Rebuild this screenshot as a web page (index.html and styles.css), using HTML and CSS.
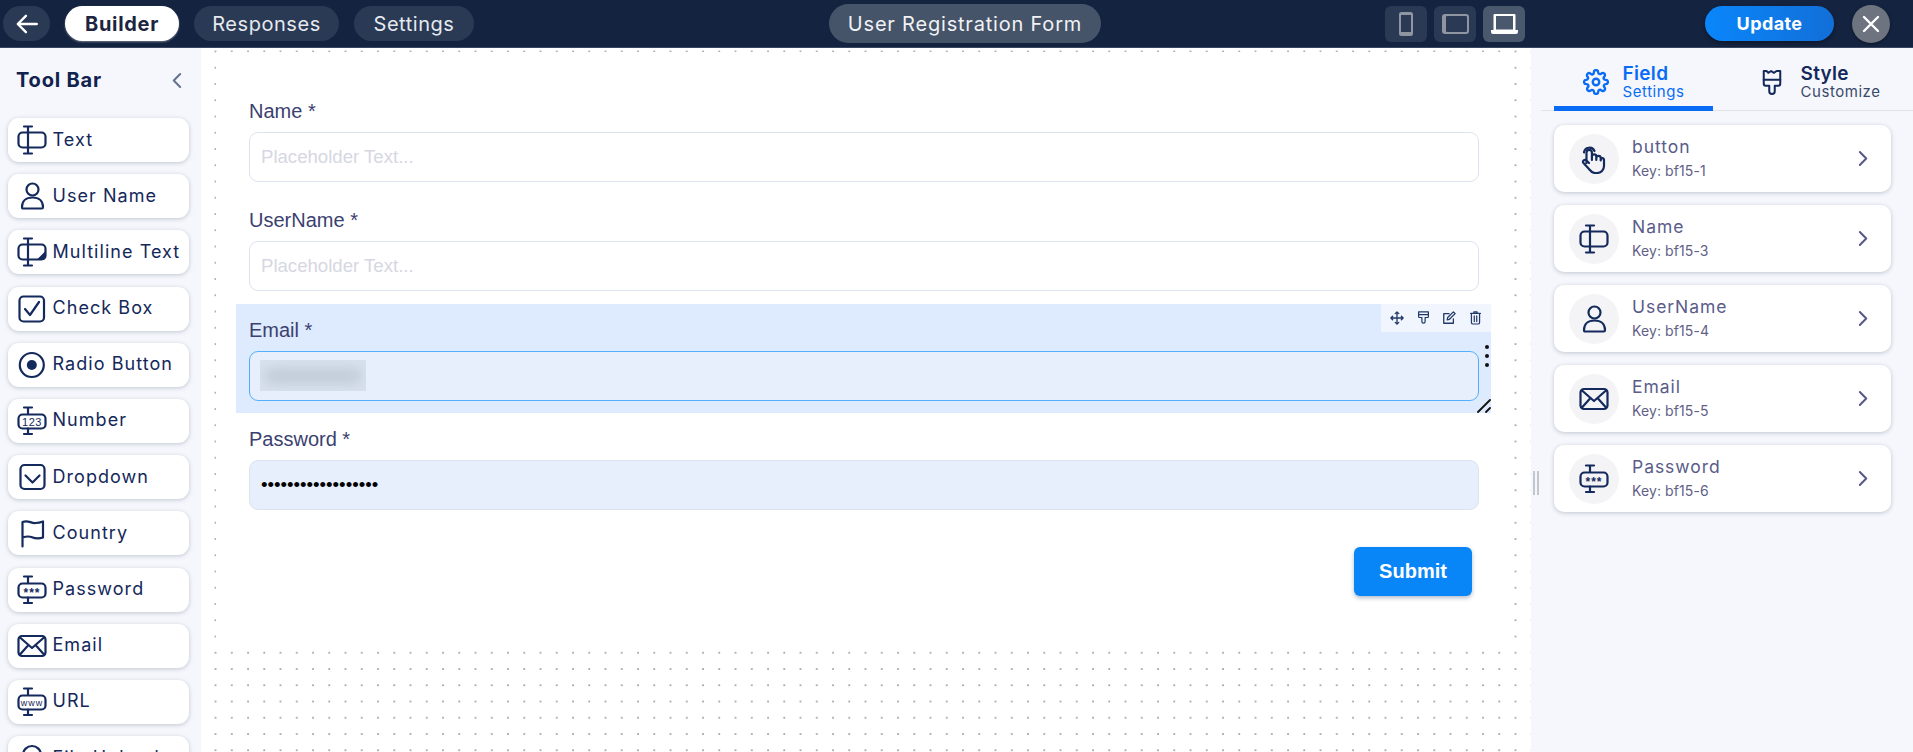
FILE: index.html
```html
<!DOCTYPE html>
<html lang="en">
<head>
<meta charset="utf-8">
<title>User Registration Form</title>
<link rel="stylesheet" href="styles.css">
</head>
<body>
<svg class="defs" width="0" height="0" aria-hidden="true">
  <symbol id="i-text" viewBox="0 0 32 30"><path d="M12 1.500v27M8 1.500h8M8 28.500h8"/><rect x="2.500" y="7.500" width="27" height="15" rx="4"/></symbol>
  <symbol id="i-multi" viewBox="0 0 32 30"><path d="M12 1.500v27M8 1.500h8M8 28.500h8"/><rect x="2.500" y="7.500" width="27" height="15" rx="4"/><path class="solid" d="M29.500 14v6a3 3 0 0 1-3 3h-6z"/></symbol>
  <symbol id="i-user" viewBox="0 0 32 30"><circle cx="16.500" cy="8.500" r="6"/><path d="M6 26c0-6 4-9.500 10.500-9.500S27 20 27 26c0 .8-.5 1.500-1.200 1.500H7.200C6.500 27.500 6 26.800 6 26z"/></symbol>
  <symbol id="i-check" viewBox="0 0 32 30"><rect x="3.500" y="2.500" width="24.500" height="25" rx="4"/><path d="M9 15l5 6L23 8"/></symbol>
  <symbol id="i-radio" viewBox="0 0 32 30"><circle cx="15.800" cy="15" r="12"/><circle class="solid" cx="15.800" cy="15" r="5"/></symbol>
  <symbol id="i-drop" viewBox="0 0 32 30"><rect x="4.500" y="3" width="24" height="24" rx="4"/><path d="M9.500 13.500l7 7 7-7"/></symbol>
  <symbol id="i-flag" viewBox="0 0 32 30"><path d="M6.500 28.500V4c6-2.500 8 1.500 13 1 2.500 0 5-.5 7.500-1.500v16c-6 2-9 .5-11.500-.5-3-1-6-.5-9 .5"/></symbol>
  <symbol id="i-mail" viewBox="0 0 32 30"><rect x="2.500" y="5" width="27" height="20" rx="3.500"/><path d="M4 6.500l12 10.500L28 6.500M4 23.500l8.500-9.500M28 23.500L19.500 14"/></symbol>
  <symbol id="i-file" viewBox="0 0 32 30"><circle cx="16" cy="12" r="9"/></symbol>
  <symbol id="i-hand" viewBox="0 0 32 30"><path d="M8.500 19V8.500a2.700 2.700 0 0 1 5.400 0V16M13.900 15v-2.500a2.200 2.200 0 0 1 4.400 0V16M18.300 14a2.200 2.200 0 0 1 4.400 0v2.500M22.700 15.500a1.700 1.700 0 0 1 3.300 0V22c0 4-3 7-7 7h-2c-3 0-4-1.500-6-4l-5.500-6c-1.500-2 1-4 3-2.500l2.500 2.500"/><path d="M6 8.500a5.500 5.500 0 0 1 10.500-1.500"/></symbol>
  <symbol id="i-gear" viewBox="0 0 24 24"><circle cx="12" cy="12" r="3"/><path d="M19.400 15a1.650 1.650 0 0 0 .33 1.820l.06.06a2 2 0 1 1-2.830 2.830l-.06-.06a1.650 1.650 0 0 0-2.820 1.170V21a2 2 0 0 1-4 0v-.09A1.650 1.650 0 0 0 7.270 19.740l-.06.06a2 2 0 1 1-2.830-2.830l.06-.06A1.650 1.650 0 0 0 3.270 14H3a2 2 0 0 1 0-4h.09A1.650 1.650 0 0 0 4.260 7.270l-.06-.06a2 2 0 1 1 2.830-2.830l.06.06A1.650 1.650 0 0 0 10 3.270V3a2 2 0 0 1 4 0v.09a1.650 1.650 0 0 0 2.820 1.170l.06-.06a2 2 0 1 1 2.830 2.830l-.06.06A1.650 1.650 0 0 0 20.910 10H21a2 2 0 0 1 0 4h-.09a1.650 1.650 0 0 0-1.510 1z"/></symbol>
  <symbol id="i-brush" viewBox="0 0 24 30"><path d="M3 3h3l2 2 3-2 3 2 3-2h4v14a2 2 0 0 1-2 2h-4v6a3 3 0 0 1-6 0v-6H5a2 2 0 0 1-2-2z"/><path d="M3 12.500h18"/></symbol>
</svg>

<header class="topbar">
  <div class="nav">
    <button class="pill back" aria-label="Back"><svg viewBox="0 0 24 24" width="26" height="26"><path d="M21 12H4M11 4.500L3.500 12l7.500 7.500"/></svg></button>
    <button class="pill active w-builder">Builder</button>
    <button class="pill w-resp">Responses</button>
    <button class="pill w-set">Settings</button>
  </div>
  <div class="form-title">User Registration Form</div>
  <div class="devices">
    <button class="dev"><svg viewBox="0 0 16 24" width="16" height="24"><rect x="1" y="0" width="14" height="24" rx="2.500" fill="#8f96a2"/><rect x="3" y="3" width="10" height="17" fill="#2a3a55"/></svg></button>
    <button class="dev"><svg viewBox="0 0 27 20" width="27" height="20"><rect width="27" height="20" rx="3" fill="#8f96a2"/><rect x="4" y="2" width="21" height="16" rx="1" fill="#2a3a55"/></svg></button>
    <button class="dev on"><svg viewBox="0 0 27 20" width="27" height="20"><path fill="#fff" d="M3.500 0h20a1 1 0 0 1 1 1v15H27v2a2 2 0 0 1-2 2H2a2 2 0 0 1-2-2v-2h2.500V1a1 1 0 0 1 1-1z"/><rect x="5" y="2" width="17" height="13.500" fill="#4a586e"/></svg></button>
  </div>
  <button class="update">Update</button>
  <button class="close" aria-label="Close"><svg viewBox="0 0 24 24" width="24" height="24"><path d="M5 5l14 14M19 5L5 19"/></svg></button>
</header>

<main class="main">
  <aside class="toolbar">
    <div class="tb-head"><h2>Tool Bar</h2><svg class="tb-chev" viewBox="0 0 12 18" width="11" height="17"><path d="M10 2L3 9l7 7"/></svg></div>
    <ul class="tools">
      <li class="tool"><svg class="ic"><use href="#i-text"/></svg>Text</li>
      <li class="tool"><svg class="ic"><use href="#i-user"/></svg>User Name</li>
      <li class="tool"><svg class="ic"><use href="#i-multi"/></svg>Multiline Text</li>
      <li class="tool"><svg class="ic"><use href="#i-check"/></svg>Check Box</li>
      <li class="tool"><svg class="ic"><use href="#i-radio"/></svg>Radio Button</li>
      <li class="tool"><svg class="ic" viewBox="0 0 32 30"><g class="ln"><path d="M12 1.500V8M12 22.500V28M8 1.500h8M8 28h8"/><rect x="2.500" y="8.500" width="27" height="14" rx="4"/></g><text x="16" y="19.500" class="ic-t">123</text></svg>Number</li>
      <li class="tool"><svg class="ic"><use href="#i-drop"/></svg>Dropdown</li>
      <li class="tool"><svg class="ic"><use href="#i-flag"/></svg>Country</li>
      <li class="tool"><svg class="ic" viewBox="0 0 32 30"><g class="ln"><path d="M12 1.500V8M12 22.500V28M8 1.500h8M8 28h8"/><rect x="2.500" y="8.500" width="27" height="14" rx="4"/></g><text x="16" y="21.500" class="ic-s">***</text></svg>Password</li>
      <li class="tool"><svg class="ic"><use href="#i-mail"/></svg>Email</li>
      <li class="tool"><svg class="ic" viewBox="0 0 32 30"><g class="ln"><path d="M12 1.500V8M12 22.500V28M8 1.500h8M8 28h8"/><rect x="2.500" y="8.500" width="27" height="14" rx="4"/></g><text x="16" y="19" class="ic-w">www</text></svg>URL</li>
      <li class="tool"><svg class="ic"><use href="#i-file"/></svg>File Upload</li>
    </ul>
  </aside>

  <section class="canvas">
    <form class="form">
      <div class="field"><label>Name *</label><input class="inp" placeholder="Placeholder Text..."></div>
      <div class="field"><label>UserName *</label><input class="inp" placeholder="Placeholder Text..."></div>
      <div class="field selected">
        <label>Email *</label>
        <div class="inp filled focus"><span class="blur"><span class="blur-in"></span></span></div>
        <div class="actions">
          <svg viewBox="0 0 16 16" width="14" height="14"><path d="M8 1v14M1 8h14M6 3l2-2 2 2M6 13l2 2 2-2M3 6L1 8l2 2M13 6l2 2-2 2"/></svg>
          <svg viewBox="0 0 16 18" width="13" height="15"><path d="M2 2h12v6a1 1 0 0 1-1 1h-3v5a2 2 0 0 1-4 0V9H3a1 1 0 0 1-1-1z"/><path d="M2 5.500h12"/></svg>
          <svg viewBox="0 0 16 16" width="14" height="14"><path d="M13 9v5H2V3h6M6 10l.5-2.500L13 1l2 2-6.500 6.500z"/></svg>
          <svg viewBox="0 0 16 18" width="13" height="15"><path d="M3 4h10v11a2 2 0 0 1-2 2H5a2 2 0 0 1-2-2zM2 4h12M6 4V2h4v2M6.500 7v7M9.500 7v7"/></svg>
        </div>
        <div class="kebab"><i></i><i></i><i></i></div>
        <svg class="resize" viewBox="0 0 14 14" width="14" height="14"><path d="M1 13L13 1M9 13l4-4"/></svg>
      </div>
      <div class="field"><label>Password *</label><input class="inp filled" type="password" value="abcdefghijklmnopqr"></div>
      <div class="submit-row"><button type="button" class="submit">Submit</button></div>
    </form>
  </section>

  <aside class="panel">
    <span class="grip"></span>
    <div class="tabs">
      <div class="tab current"><svg class="tab-ic gear"><use href="#i-gear"/></svg><div><b>Field</b><span>Settings</span></div></div>
      <div class="tab second"><svg class="tab-ic brush"><use href="#i-brush"/></svg><div><b>Style</b><span>Customize</span></div></div>
    </div>
    <ul class="fields">
      <li class="fcard"><span class="circle"><svg class="ic"><use href="#i-hand"/></svg></span><div class="ftext"><b>button</b><span>Key: bf15-1</span></div><svg class="chev" viewBox="0 0 12 18" width="11" height="17"><path d="M2 2l7 7-7 7"/></svg></li>
      <li class="fcard"><span class="circle"><svg class="ic"><use href="#i-text"/></svg></span><div class="ftext"><b>Name</b><span>Key: bf15-3</span></div><svg class="chev" viewBox="0 0 12 18" width="11" height="17"><path d="M2 2l7 7-7 7"/></svg></li>
      <li class="fcard"><span class="circle"><svg class="ic"><use href="#i-user"/></svg></span><div class="ftext"><b>UserName</b><span>Key: bf15-4</span></div><svg class="chev" viewBox="0 0 12 18" width="11" height="17"><path d="M2 2l7 7-7 7"/></svg></li>
      <li class="fcard"><span class="circle"><svg class="ic"><use href="#i-mail"/></svg></span><div class="ftext"><b>Email</b><span>Key: bf15-5</span></div><svg class="chev" viewBox="0 0 12 18" width="11" height="17"><path d="M2 2l7 7-7 7"/></svg></li>
      <li class="fcard"><span class="circle"><svg class="ic" viewBox="0 0 32 30"><g class="ln"><path d="M12 1.500V8M12 22.500V28M8 1.500h8M8 28h8"/><rect x="2.500" y="8.500" width="27" height="14" rx="4"/></g><text x="16" y="21.500" class="ic-s">***</text></svg></span><div class="ftext"><b>Password</b><span>Key: bf15-6</span></div><svg class="chev" viewBox="0 0 12 18" width="11" height="17"><path d="M2 2l7 7-7 7"/></svg></li>
    </ul>
  </aside>
</main>
</body>
</html>
```
FILE: styles.css
```css
* { box-sizing: border-box; }
html, body { margin: 0; height: 100%; }
body { width: 1913px; height: 752px; overflow: hidden; font-family: Inter, "Noto Sans", sans-serif; background: #fff; color: #14285a; }
button { font-family: inherit; border: 0; cursor: pointer; padding: 0; }
ul { list-style: none; margin: 0; padding: 0; }
.defs { position: absolute; }
symbol path, symbol rect, symbol circle, .ln path, .ln rect { fill: none; stroke: currentColor; stroke-width: 2.200; stroke-linecap: round; stroke-linejoin: round; }
symbol .solid { fill: currentColor; stroke: none; }
.ic-t, .ic-w, .ic-s { fill: currentColor; stroke: none; text-anchor: middle; font-family: "Liberation Sans", sans-serif; }
.ic-t { font-size: 11px; letter-spacing: .5px; }
.ic-w { font-size: 9px; }
.ic-s { font-size: 12px; font-weight: 700; letter-spacing: 1px; }

.topbar { height: 48px; display: flex; align-items: center; background: #14233f; border-bottom: 1px solid #38465f; }
.nav { flex: 0 0 829px; display: flex; align-items: center; gap: 15px; padding-left: 3px; }
.pill { height: 35px; border-radius: 18px; background: #2a3a55; color: #e6e9ef; font-size: 20px; letter-spacing: .55px; }
.back { width: 47px; display: flex; align-items: center; justify-content: center; }
.back svg { fill: none; stroke: #fff; stroke-width: 2.200; stroke-linecap: round; stroke-linejoin: round; }
.w-builder { width: 114px; }
.w-resp { width: 145px; }
.w-set { width: 120px; }
.pill.active { background: #fff; color: #1d2440; font-weight: 700; letter-spacing: .7px; box-shadow: 0 1px 2px rgba(255,255,255,.4); }
.form-title { width: 272px; height: 39px; border-radius: 20px; background: #455468; color: #f0f2f5; font-size: 20px; letter-spacing: .8px; display: flex; align-items: center; justify-content: center; white-space: nowrap; }
.devices { margin-left: 284px; display: flex; gap: 7px; }
.dev { width: 42px; height: 36px; border-radius: 6px; background: #2a3a55; display: flex; align-items: center; justify-content: center; }
.dev.on { background: #4a586e; }
.update { margin-left: 180px; width: 129px; height: 35px; border-radius: 18px; background: linear-gradient(90deg, #0a86fb, #126fd8); color: #fff; font-weight: 700; font-size: 18px; letter-spacing: .4px; box-shadow: 0 2px 4px rgba(0,0,0,.35); }
.close { margin-left: 18px; width: 38px; height: 38px; border-radius: 50%; background: #6d7480; display: flex; align-items: center; justify-content: center; box-shadow: 0 1px 3px rgba(0,0,0,.4); }
.close svg { fill: none; stroke: #fff; stroke-width: 2.400; stroke-linecap: round; }

.main { display: flex; height: 704px; }

.toolbar { flex: 0 0 201px; background: #f5f7fc; overflow: hidden; }
.tb-head { height: 70px; display: flex; align-items: center; justify-content: space-between; padding: 0 19px 6px 16px; }
.tb-head h2 { margin: 0; font-size: 20px; font-weight: 700; color: #10224d; letter-spacing: .8px; white-space: nowrap; }
.tb-chev { fill: none; stroke: #66738c; stroke-width: 2.200; stroke-linecap: round; stroke-linejoin: round; }
.tools { display: flex; flex-direction: column; gap: 12.200px; padding: 0 12px 0 8px; }
.tool { flex: 0 0 44px; height: 44px; display: flex; align-items: center; gap: 4.500px; padding: 0 0 2px 8px; background: #fff; border-radius: 11px; box-shadow: 0 1px 4px rgba(40,50,80,.25); font-size: 18px; font-weight: 400; letter-spacing: 1.050px; color: #14285a; white-space: nowrap; }
.tool .ic { margin-top: 2px; }
.ic { width: 32px; height: 30px; flex: none; color: #14295c; }

.canvas { flex: 0 0 1330px; background-color: #fff; background-image: radial-gradient(circle at 1px 1px, #85878e 0, #85878e .5px, transparent 1px); background-size: 16.250px 16.250px; background-position: 13.500px 2.500px; }
.form { margin: 4px 0 0 15px; width: 1298px; height: 599px; background: #fff; padding: 33px 23px 0 20px; }
.field { position: relative; height: 109.330px; padding: 0 12px 0 13px; }
.field label { display: block; height: 47px; padding-top: 14px; font: 20px/24px "Liberation Sans", sans-serif; color: #3b4170; }
.inp { display: block; width: 100%; height: 50px; border: 1.500px solid #dce3ee; border-radius: 9px; background: #fff; padding: 0 11px; font: 18.600px "Liberation Sans", sans-serif; color: #000; outline: 0; }
.inp::placeholder { color: #d6d7e2; opacity: 1; }
.inp.filled { background: #e8effc; }
.inp.focus { border-color: #55aefb; display: flex; align-items: center; padding-left: 10px; }
.selected { background: #deebfe; }
.blur { display: block; width: 106px; height: 31px; overflow: hidden; background: #d8e1ee; }
.blur-in { display: block; margin: 8px 4px; height: 16px; border-radius: 8px; background: #c2ccd9; filter: blur(6px); }
.actions { position: absolute; top: 0; right: 0; width: 110px; height: 28px; background: #f1f6fe; display: flex; align-items: center; justify-content: space-around; padding: 0 3px; }
.actions svg { fill: none; stroke: #22386a; stroke-width: 1.500; stroke-linecap: round; stroke-linejoin: round; }
.kebab { position: absolute; top: 41px; right: 2px; display: flex; flex-direction: column; gap: 5px; }
.kebab i { display: block; width: 4px; height: 4px; border-radius: 50%; background: #111; }
.resize { position: absolute; right: 0; bottom: 0; fill: none; stroke: #111; stroke-width: 1.800; stroke-linecap: round; }
.submit-row { display: flex; justify-content: flex-end; padding: 25px 19px 0 0; }
.submit { width: 118px; height: 49px; border-radius: 6px; background: #0885f6; color: #fff; font: 700 20px "Liberation Sans", sans-serif; box-shadow: 0 2px 4px rgba(30,60,110,.35); }

.panel { position: relative; flex: 1; background: #f5f7fc; padding-left: 10px; }
.grip { position: absolute; left: 2px; top: 423px; width: 6px; height: 24px; border-left: 2px solid #c3c6cc; border-right: 2px solid #c3c6cc; }
.tabs { display: flex; height: 63px; padding-left: 13px; border-bottom: 1px solid #e1e3e8; }
.tab { display: flex; align-items: center; justify-content: center; gap: 14px; height: 63px; color: #14285a; padding-top: 5px; }
.tab.current { width: 159px; color: #0a6cf5; border-bottom: 5px solid #0a6cf5; border-radius: 4px 4px 0 0; padding-top: 10px; }
.tab.second { width: 178px; margin-left: 19px; gap: 17px; }
.tab b { display: block; font-size: 19px; line-height: 20px; font-weight: 600; letter-spacing: .3px; }
.tab span { display: block; font-size: 15px; line-height: 16px; letter-spacing: .55px; color: inherit; white-space: nowrap; }
.tab.second span { color: #3a4a6b; }
.tab-ic { flex: none; }
.gear { width: 26px; height: 26px; }
.brush { width: 22px; height: 28px; }
.fields { display: flex; flex-direction: column; gap: 13px; padding: 14px 22px 0 13px; }
.fcard { height: 67px; display: flex; align-items: center; padding: 0 22px 0 15px; background: #fff; border-radius: 10px; box-shadow: 0 1px 4px rgba(40,50,80,.25); }
.circle { width: 50px; height: 50px; border-radius: 50%; background: #f4f4f6; display: flex; align-items: center; justify-content: center; flex: none; }
.ftext { flex: 1; padding-left: 13px; margin-top: -1px; }
.ftext b { display: block; font-size: 17.500px; line-height: 24px; font-weight: 400; color: #5a5c8a; letter-spacing: .95px; }
.ftext span { display: block; font-size: 14px; line-height: 23px; letter-spacing: .1px; color: #5f6187; }
.chev { fill: none; stroke: #55588a; stroke-width: 2.200; stroke-linecap: round; stroke-linejoin: round; }
```
